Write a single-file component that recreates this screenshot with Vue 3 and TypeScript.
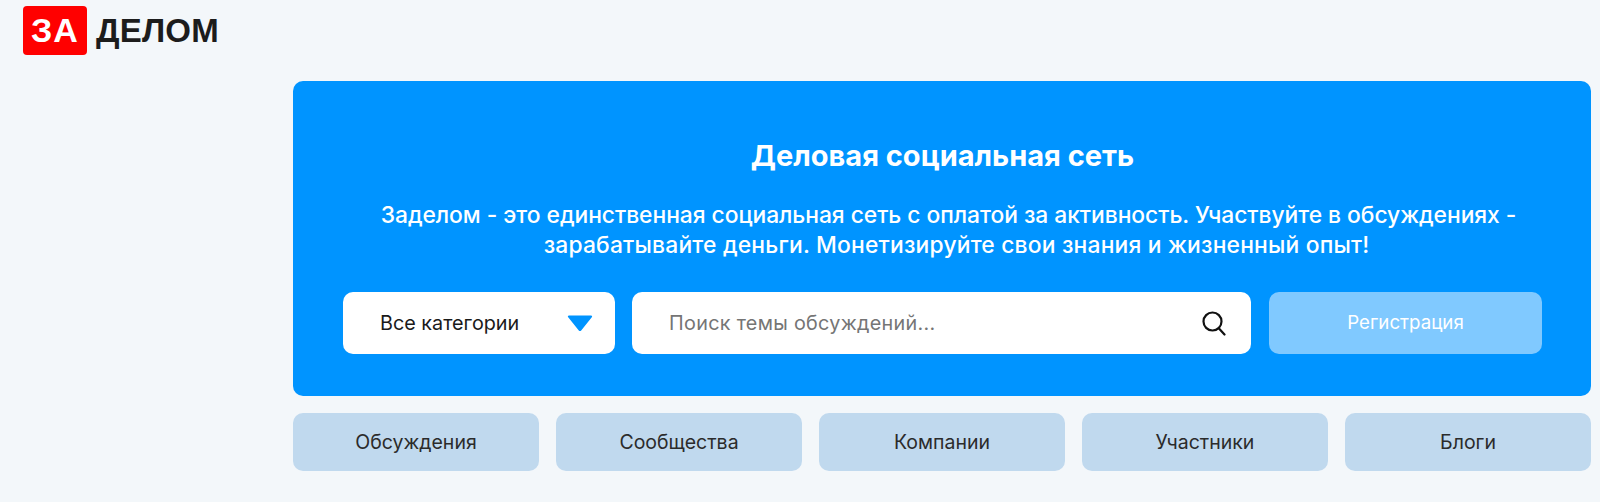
<script setup lang="ts">
const navItems: string[] = ['Обсуждения', 'Сообщества', 'Компании', 'Участники', 'Блоги'];
</script>

<template>
  <div class="page">
    <header class="logo">
      <span class="logo-mark">ЗА</span>
      <span class="logo-text">ДЕЛОМ</span>
    </header>

    <main class="content">
      <section class="hero">
        <h1 class="hero-title">Деловая социальная сеть</h1>
        <p class="hero-text">
          <span class="hero-line">Заделом - это единственная социальная сеть с оплатой за активность. Участвуйте в обсуждениях -</span>
          <span class="hero-line hero-line--second">зарабатывайте деньги. Монетизируйте свои знания и жизненный опыт!</span>
        </p>
        <div class="hero-controls">
          <div class="select">
            <span>Все категории</span>
            <svg class="select-arrow" width="28" height="20" viewBox="0 0 28 20">
              <path d="M3 2.5h22c1 0 1.500 1 .8 1.800L15.200 17.500c-.6.700-1.800.7-2.400 0L2.200 4.300C1.500 3.500 2 2.500 3 2.500z" fill="#0094ff" />
            </svg>
          </div>
          <div class="search">
            <span class="search-placeholder">Поиск темы обсуждений...</span>
            <svg class="search-icon" width="24" height="25" viewBox="0 0 24 25" fill="none" stroke="#111" stroke-width="2.200">
              <circle cx="10.500" cy="10.500" r="9" />
              <path d="M17 17.500L22.500 23.500" stroke-linecap="round" />
            </svg>
          </div>
          <button type="button" class="register">Регистрация</button>
        </div>
      </section>

      <nav class="tabs">
        <a v-for="item in navItems" :key="item" class="tab">{{ item }}</a>
      </nav>
    </main>
  </div>
</template>

<style>
html,
body {
  margin: 0;
  background: #f3f7fa;
}
</style>

<style scoped>
.page {
  height: 502px;
  box-sizing: border-box;
  padding: 6px 9px 0 23px;
  background: #f3f7fa;
  font-family: Inter, "Liberation Sans", sans-serif;
  overflow: hidden;
}

.logo {
  display: flex;
  align-items: center;
  gap: 9px;
  height: 49px;
  font-family: "Liberation Sans", Arial, sans-serif;
  font-weight: 700;
}

.logo-mark {
  width: 64px;
  height: 49px;
  display: flex;
  align-items: center;
  justify-content: center;
  background: #ff0000;
  border-radius: 4px;
  color: #fff;
  font-size: 34px;
  letter-spacing: 1px;
}

.logo-text {
  color: #1c1c1c;
  font-size: 33px;
  letter-spacing: 0.2px;
}

.content {
  margin: 26px 0 0 270px;
}

.hero {
  box-sizing: border-box;
  height: 315px;
  padding: 57px 49px 0 50px;
  background: #0094ff;
  border-radius: 10px;
  color: #fff;
  text-align: center;
}

.hero-title {
  margin: 0;
  font-size: 29px;
  line-height: 36px;
  font-weight: 700;
}

.hero-text {
  margin: 26px 0 0;
  padding-left: 12px;
  font-size: 22.850px;
  line-height: 30px;
  font-weight: 450;
}

.hero-line {
  display: block;
  letter-spacing: -0.06px;
}

.hero-line--second {
  padding-left: 16px;
  letter-spacing: 0.18px;
}

.hero-controls {
  display: grid;
  grid-template-columns: 272px 619px 1fr;
  gap: 17px;
  height: 62px;
  margin-top: 32px;
}

.select,
.search {
  display: flex;
  align-items: center;
  justify-content: space-between;
  background: #fff;
  border-radius: 10px;
  font-size: 19.800px;
  text-align: left;
  box-sizing: border-box;
}

.select {
  padding-left: 37px;
  padding-right: 21px;
  color: #1a1a1a;
}

.search {
  padding-left: 37px;
  padding-right: 25px;
}

.search-placeholder {
  color: #757575;
  letter-spacing: 0.3px;
}

.register {
  margin-left: 1px;
  border: none;
  border-radius: 10px;
  background: #80c9ff;
  color: #fff;
  font-family: inherit;
  font-size: 18.700px;
  padding-bottom: 2px;
}

.tabs {
  display: grid;
  grid-template-columns: repeat(5, 1fr);
  gap: 17px;
  margin-top: 17px;
}

.tab {
  height: 58px;
  display: flex;
  align-items: center;
  justify-content: center;
  background: #c0d9ee;
  border-radius: 10px;
  color: #2b2b2b;
  font-size: 19.500px;
}
</style>
